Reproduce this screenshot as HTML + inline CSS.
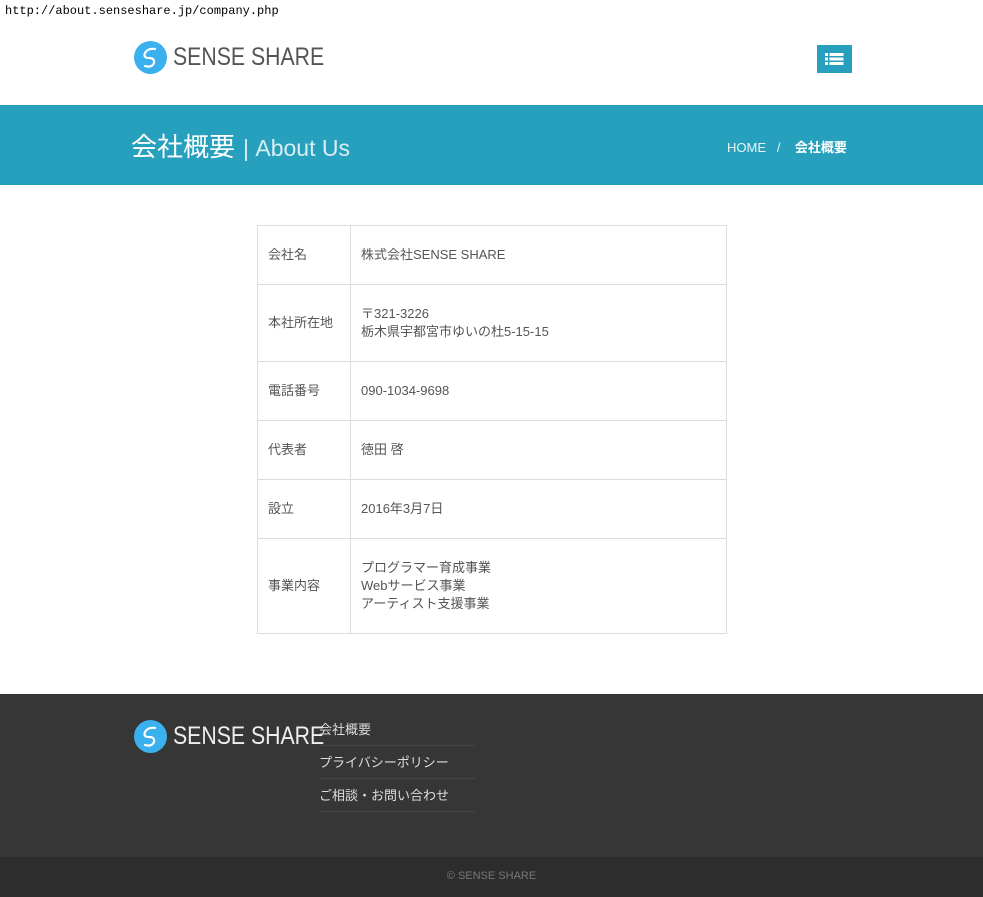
<!DOCTYPE html>
<html><head><meta charset="utf-8"><style>
*{margin:0;padding:0;box-sizing:border-box}
body{width:983px;height:897px;background:#fff;font-family:"Liberation Sans","Noto Sans CJK JP",sans-serif;position:relative;overflow:hidden;color:#555}
.abs{position:absolute}
.url{left:5px;top:4px;font-size:12px;color:#000;font-family:"Liberation Mono","Noto Sans CJK JP",monospace}
.logo{display:flex;align-items:center}
.logo .txt{font-size:25px;margin-left:6px;display:inline-block;transform:scaleX(0.85);transform-origin:left center;white-space:nowrap}
.band{left:0;top:105px;width:983px;height:80px;background:#27a0bd}
table{position:absolute;left:257px;top:225px;width:470px;border-collapse:collapse;font-size:13px;color:#555}
td{border:1px solid #ddd;padding:0 10px;line-height:18px}
td.l{width:93px}
</style></head><body>
<div class="abs url">http://about.senseshare.jp/company.php</div>
<div class="abs logo" style="left:134px;top:41px">
<svg width="33" height="33" viewBox="0 0 33 33"><circle cx="16.5" cy="16.5" r="16.5" fill="#3ab0ef"/><path d="M21 8 Q14 7 11 12 Q9 17 15 17 Q21 17 20 22 Q18 27 11 25" fill="none" stroke="#fff" stroke-width="2.2" stroke-linecap="round"/></svg>
<span class="txt" style="color:#555">SENSE SHARE</span></div>
<div class="abs" style="left:817px;top:45px;width:35px;height:28px;background:#27a0bd">
<svg width="35" height="28"><g fill="#fff"><rect x="8" y="8" width="3" height="3"/><rect x="8" y="12.5" width="3" height="3"/><rect x="8" y="17" width="3" height="3"/><rect x="12.5" y="8" width="14" height="3"/><rect x="12.5" y="12.5" width="14" height="3"/><rect x="12.5" y="17" width="14" height="3"/></g></svg></div>
<div class="abs band"></div>
<div class="abs" style="left:131px;top:127px;color:#fff;font-size:26px;white-space:nowrap">会社概要<span style="color:#d8eef4;font-size:23px;margin-left:8px">| About Us</span></div>
<div class="abs" style="left:727px;top:137px;color:#e8f4f8;font-size:13px;white-space:nowrap">HOME &nbsp;&nbsp;/&nbsp;&nbsp;&nbsp; <span style="color:#fff;font-weight:bold">会社概要</span></div>
<table>
<tr style="height:59px"><td class="l">会社名</td><td>株式会社SENSE SHARE</td></tr>
<tr style="height:77px"><td class="l">本社所在地</td><td>〒321-3226<br>栃木県宇都宮市ゆいの杜5-15-15</td></tr>
<tr style="height:59px"><td class="l">電話番号</td><td>090-1034-9698</td></tr>
<tr style="height:59px"><td class="l">代表者</td><td>徳田 啓</td></tr>
<tr style="height:59px"><td class="l">設立</td><td>2016年3月7日</td></tr>
<tr style="height:95px"><td class="l">事業内容</td><td>プログラマー育成事業<br>Webサービス事業<br>アーティスト支援事業</td></tr>
</table>
<div class="abs" style="left:0;top:694px;width:983px;height:163px;background:#363636"></div>
<div class="abs" style="left:0;top:857px;width:983px;height:40px;background:#2d2d2d"></div>
<div class="abs logo" style="left:134px;top:720px">
<svg width="33" height="33" viewBox="0 0 33 33"><circle cx="16.5" cy="16.5" r="16.5" fill="#3ab0ef"/><path d="M21 8 Q14 7 11 12 Q9 17 15 17 Q21 17 20 22 Q18 27 11 25" fill="none" stroke="#fff" stroke-width="2.2" stroke-linecap="round"/></svg>
<span class="txt" style="color:#eee">SENSE SHARE</span></div>
<div class="abs" style="left:319px;top:713px;width:157px;font-size:13px;color:#ddd">
<div style="height:33px;line-height:33px;border-bottom:1px solid #444">会社概要</div>
<div style="height:33px;line-height:33px;border-bottom:1px solid #444">プライバシーポリシー</div>
<div style="height:33px;line-height:33px;border-bottom:1px solid #444">ご相談・お問い合わせ</div>
</div>
<div class="abs" style="left:0;top:870px;width:983px;text-align:center;font-size:11px;color:#777">© SENSE SHARE</div>
</body></html>
